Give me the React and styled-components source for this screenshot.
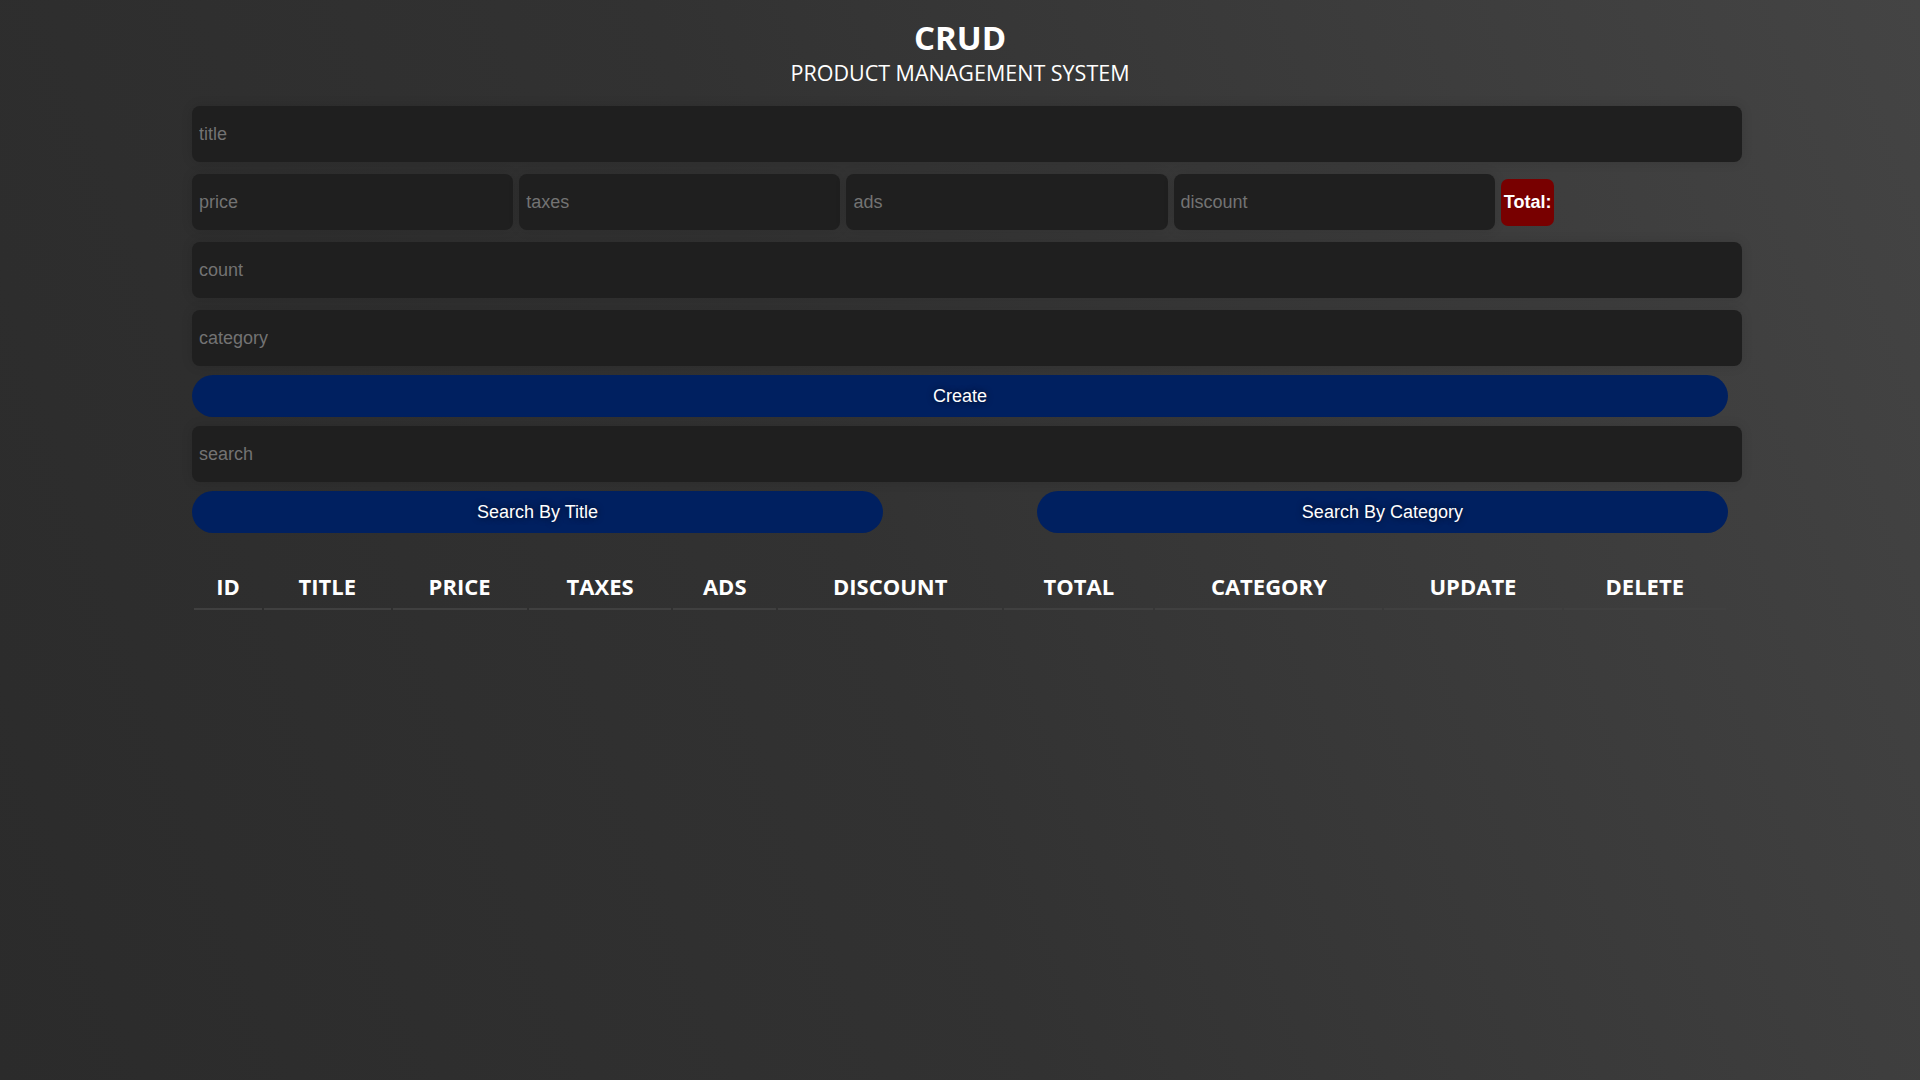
import styled, { createGlobalStyle } from "styled-components";

const GlobalStyle = createGlobalStyle`
  html, body {
    margin: 0;
    padding: 0;
  }
  body {
    min-height: 100vh;
    background: linear-gradient(70deg, #2b2b2b 0%, #323232 45%, #444444 100%);
    color: #ffffff;
    font-family: "Open Sans", "Noto Sans", sans-serif;
  }
  #root {
    min-height: 100vh;
  }
`;

const Crud = styled.div`
  width: 80%;
  margin: 0 auto;
  padding-top: 18px;
`;

const Head = styled.div`
  text-align: center;
  text-transform: uppercase;
`;

const Title = styled.h1`
  margin: 0;
  font-size: 33px;
  line-height: 40px;
  font-weight: 700;
`;

const Subtitle = styled.p`
  margin: 2px 0 0;
  font-size: 21.5px;
  line-height: 26px;
  font-weight: 400;
`;

const Form = styled.div`
  display: flex;
  flex-direction: column;
  margin-top: 14px;
`;

const Input = styled.input`
  box-sizing: content-box;
  width: ${(p) => p.$width || "100%"};
  height: 42px;
  padding: 7px;
  margin: 6px 0;
  border: none;
  outline: none;
  border-radius: 8px;
  background: #1f1f1f;
  color: #ffffff;
  font-family: "Liberation Sans", Arial, sans-serif;
  font-size: 18px;
  box-shadow: 0 0 12px rgba(0, 0, 0, 0.12);

  &::placeholder {
    color: #737373;
  }
`;

const PriceRow = styled.div`
  display: flex;
  align-items: center;
  gap: 6px;
`;

const Total = styled.small`
  padding: 0 3px;
  height: 47px;
  display: flex;
  align-items: center;
  background: #780000;
  border-radius: 7px;
  font-family: "Liberation Sans", Arial, sans-serif;
  font-size: 18px;
  font-weight: 700;
`;

const Button = styled.button`
  width: ${(p) => p.$width || "100%"};
  height: 42px;
  margin: 3px 0;
  border: none;
  border-radius: 21px;
  background: #002060;
  color: #ffffff;
  font-family: "Liberation Sans", Arial, sans-serif;
  font-size: 18px;
  text-shadow: 0 0 6px rgba(0, 0, 0, 0.7);
  cursor: pointer;
`;

const SearchButtons = styled.div`
  display: flex;
  justify-content: space-between;
`;

const Table = styled.table`
  width: 100%;
  margin-top: 25px;
  text-align: center;
`;

const Th = styled.th`
  padding: 8px 8px 7px;
  font-size: 22px;
  line-height: 30px;
  font-weight: 700;
  text-transform: uppercase;
  border-bottom: 2px solid #404040;
`;

const columns = [
  "id",
  "title",
  "price",
  "taxes",
  "ads",
  "discount",
  "total",
  "category",
  "update",
  "delete",
];

export default function App() {
  return (
    <>
      <GlobalStyle />
      <Crud>
        <Head>
          <Title>crud</Title>
          <Subtitle>product management system</Subtitle>
        </Head>
        <Form>
          <Input type="text" placeholder="title" />
          <PriceRow>
            <Input type="number" placeholder="price" $width="20%" />
            <Input type="number" placeholder="taxes" $width="20%" />
            <Input type="number" placeholder="ads" $width="20%" />
            <Input type="number" placeholder="discount" $width="20%" />
            <Total>Total:</Total>
          </PriceRow>
          <Input type="number" placeholder="count" />
          <Input type="text" placeholder="category" />
          <Button>Create</Button>
          <Input type="text" placeholder="search" />
          <SearchButtons>
            <Button $width="45%">Search By Title</Button>
            <Button $width="45%">Search By Category</Button>
          </SearchButtons>
        </Form>
        <Table>
          <thead>
            <tr>
              {columns.map((c) => (
                <Th key={c}>{c}</Th>
              ))}
            </tr>
          </thead>
          <tbody></tbody>
        </Table>
      </Crud>
    </>
  );
}
